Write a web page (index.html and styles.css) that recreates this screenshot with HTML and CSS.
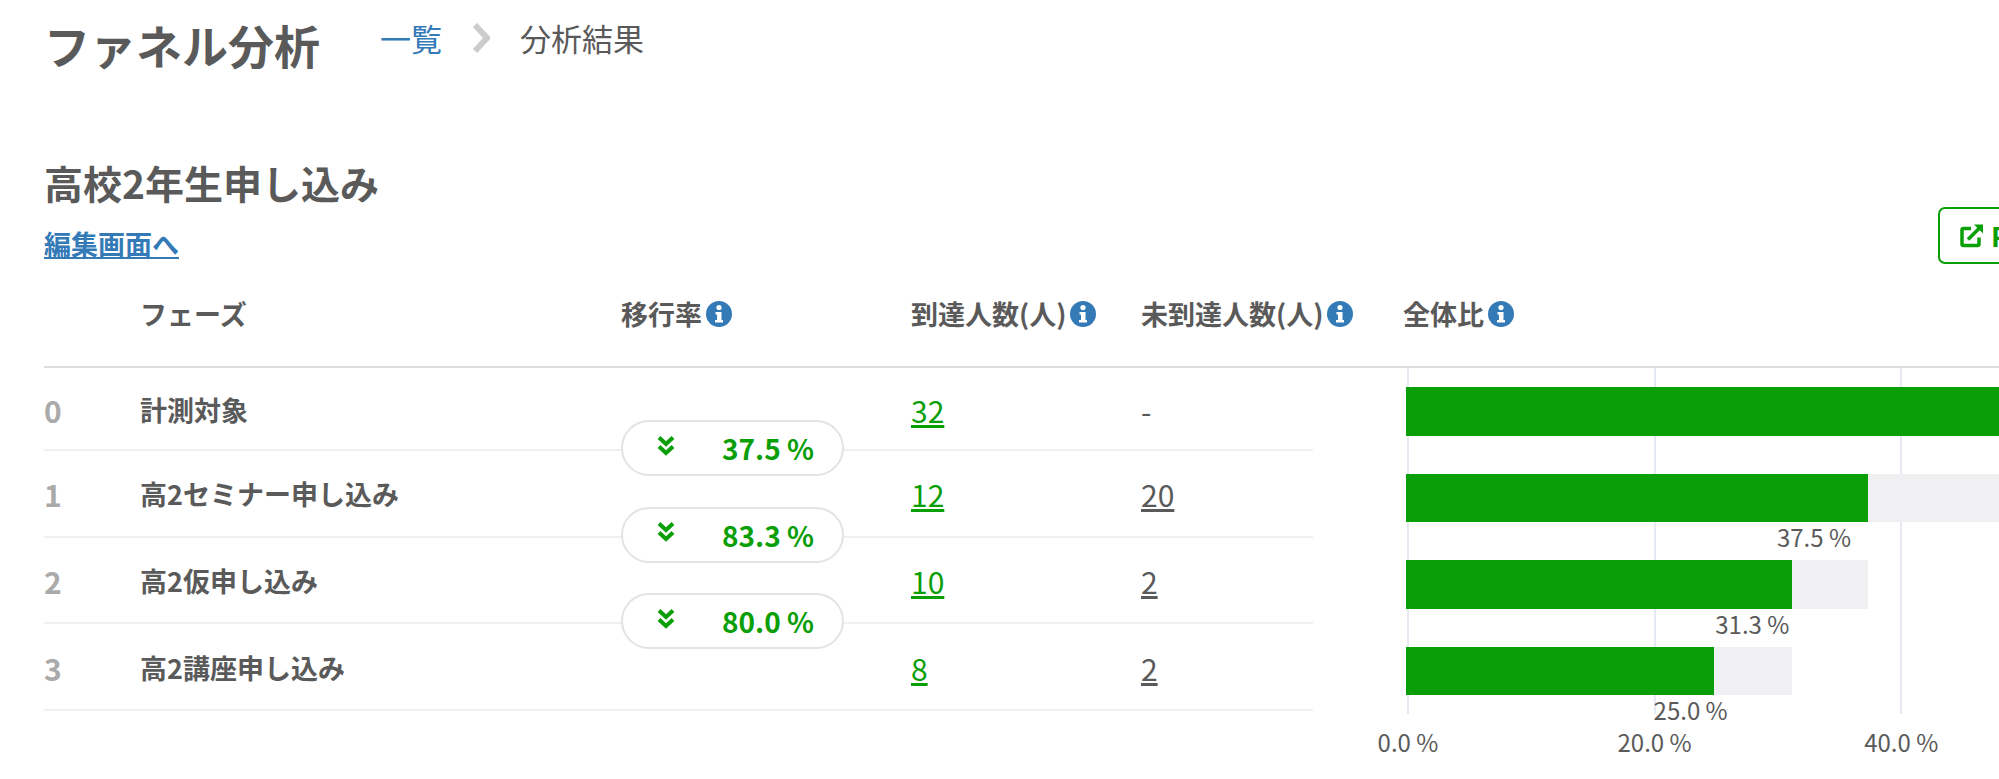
FILE: index.html

```html
<!DOCTYPE html>
<html lang="ja">
<head>
  <meta charset="UTF-8" />
  <meta name="viewport" content="width=device-width, initial-scale=1.0" />
  <title>ファネル分析</title>
  <link rel="stylesheet" href="styles.css">
</head>
<body>
<div class="container">
  <!-- Page title -->
  <div class="page-head">
    <h1>ファネル分析</h1>
    <nav class="breadcrumb">
      <a href="#">一覧</a>
      <svg class="crumb-sep" viewBox="0 0 18 30"><polyline points="3,2 15,15 3,28" /></svg>
      <span>分析結果</span>
    </nav>
  </div>

  <!-- Funnel title -->
  <div class="section-head">
    <div>
      <h2>高校2年生申し込み</h2>
      <a class="edit-link" href="#">編集画面へ</a>
    </div>
    <a class="btn-export" href="#">
      <svg class="icon-export" viewBox="0 0 24 24"><path d="M11 5H3.5A1.5 1.5 0 0 0 2 6.5v14A1.5 1.5 0 0 0 3.5 22h14a1.5 1.5 0 0 0 1.500-1.500V14" /><path d="M8 16L20 4" /><path class="arrow" d="M14 1h9v9z" /></svg>
      PDF出力
    </a>
  </div>

  <!-- Table header -->
  <div class="table-head">
    <span></span>
    <span>フェーズ</span>
    <span>移行率<svg class="icon-info" viewBox="0 0 26 26"><use href="#info" /></svg></span>
    <span>到達人数(人)<svg class="icon-info" viewBox="0 0 26 26"><use href="#info" /></svg></span>
    <span>未到達人数(人)<svg class="icon-info" viewBox="0 0 26 26"><use href="#info" /></svg></span>
    <span>全体比<svg class="icon-info" viewBox="0 0 26 26"><use href="#info" /></svg></span>
  </div>

  <div class="funnel">
    <div class="rows">
      <div class="row row-first">
        <span class="num">0</span>
        <span class="name">計測対象</span>
        <span></span>
        <a class="reach" href="#">32</a>
        <span class="miss">-</span>
        <div class="rate"><svg class="icon-down" viewBox="0 0 18 21"><use href="#down" /></svg><b>37.5 %</b></div>
      </div>
      <div class="row">
        <span class="num">1</span>
        <span class="name">高2セミナー申し込み</span>
        <span></span>
        <a class="reach" href="#">12</a>
        <a class="miss" href="#">20</a>
        <div class="rate"><svg class="icon-down" viewBox="0 0 18 21"><use href="#down" /></svg><b>83.3 %</b></div>
      </div>
      <div class="row">
        <span class="num">2</span>
        <span class="name">高2仮申し込み</span>
        <span></span>
        <a class="reach" href="#">10</a>
        <a class="miss" href="#">2</a>
        <div class="rate"><svg class="icon-down" viewBox="0 0 18 21"><use href="#down" /></svg><b>80.0 %</b></div>
      </div>
      <div class="row">
        <span class="num">3</span>
        <span class="name">高2講座申し込み</span>
        <span></span>
        <a class="reach" href="#">8</a>
        <a class="miss" href="#">2</a>
      </div>
    </div>

    <!-- Chart: 20% = 246.6px -->
    <div class="chart">
      <div class="grid" style="left:0%"><span>0.0 %</span></div>
      <div class="grid" style="left:20%"><span>20.0 %</span></div>
      <div class="grid" style="left:40%"><span>40.0 %</span></div>
      <div class="bars">
        <div class="track" style="width:100%"><div class="fill" style="width:100%"></div></div>
        <div class="track" style="width:100%"><div class="fill" style="width:37.5%"></div><span class="bar-label" style="left:30%">37.5 %</span></div>
        <div class="track-wrap">
          <div class="track" style="width:37.5%"><div class="fill" style="width:83.47%"></div></div>
          <span class="bar-label" style="left:25%">31.3 %</span>
        </div>
        <div class="track-wrap">
          <div class="track" style="width:31.3%"><div class="fill" style="width:79.87%"></div></div>
          <span class="bar-label" style="left:20%">25.0 %</span>
        </div>
      </div>
    </div>
  </div>
</div>

<svg class="defs" width="0" height="0">
  <symbol id="info" viewBox="0 0 26 26">
    <circle cx="13" cy="13" r="13" fill="#337ab7" />
    <circle cx="13" cy="6.500" r="2.600" fill="#fff" />
    <path d="M9.500 11h6v8h1.500v2.500H9v-2.500h2v-5.500H9.500z" fill="#fff" />
  </symbol>
  <symbol id="down" viewBox="0 0 18 21">
    <path d="M2 2.500l7 6.500 7-6.500M2 11.500l7 6.500 7-6.500" fill="none" stroke="#0a9e07" stroke-width="4" />
  </symbol>
</svg>
</body>
</html>
```

FILE: styles.css

```css
html, body { margin: 0; height: 100%; overflow: hidden; background: #fff; }
body { font-family: "Noto Sans CJK JP", "Noto Sans", sans-serif; color: #5a5a5a; }
a { color: inherit; }
.container { padding: 0 44px; width: 2100px; }
.defs { position: absolute; }

.page-head { display: flex; height: 92px; }
h1 { margin: 0; font-size: 46px; line-height: 88px; font-weight: 700; }
.breadcrumb { display: flex; align-items: center; height: 75px; margin-left: 60px; font-size: 31px; }
.breadcrumb a { color: #337ab7; text-decoration: none; }
.crumb-sep { width: 18px; height: 30px; margin: 0 30px; }
.crumb-sep polyline { fill: none; stroke: #ccc; stroke-width: 6; }

.section-head { display: flex; justify-content: space-between; margin-top: 65px; }
h2 { margin: 0; font-size: 39px; line-height: 50px; font-weight: 700; }
.edit-link { display: block; margin-top: 17px; font-size: 27px; line-height: 40px; color: #337ab7; font-weight: 700; }
.btn-export { display: flex; align-items: center; gap: 7px; box-sizing: border-box; width: 206px; height: 57px; margin-top: 50px; padding-left: 20px; border: 2px solid #0a9e07; border-radius: 7px; color: #0a9e07; font-size: 27px; font-weight: 700; text-decoration: none; }
.icon-export { width: 24px; height: 25px; flex: none; }
.icon-export path { fill: none; stroke: #0a9e07; stroke-width: 3.5; }
.icon-export .arrow { fill: #0a9e07; stroke: none; }

.table-head { display: grid; grid-template-columns: 96px 481px 290px 230px 262px 1fr; align-items: center; height: 99px; padding-bottom: 3px; border-bottom: 2px solid #ddd; font-size: 27px; font-weight: 700; }
.table-head span { display: flex; align-items: center; }
.icon-info { width: 26px; height: 26px; margin-left: 4px; flex: none; }

.funnel { display: flex; }
.rows { width: 1269px; flex: none; }
.row { position: relative; display: grid; grid-template-columns: 96px 481px 290px 230px 172px; align-items: center; box-sizing: border-box; height: 86.7px; padding-top: 2px; border-bottom: 2px solid #f0f0f0; font-size: 27px; line-height: 40px; }
.row-first { height: 83px; }
.num { color: #aaa; font-size: 30px; font-weight: 700; }
.name { font-weight: 700; }
.reach { color: #0a9e07; font-size: 30px; justify-self: start; }
.miss { font-size: 30px; justify-self: start; }
.rate { position: absolute; left: 577px; bottom: -27px; display: flex; align-items: center; box-sizing: border-box; width: 223px; height: 56px; padding-left: 34px; border: 2px solid #e3e3e3; border-radius: 28px; background: #fff; color: #0a9e07; font-size: 28px; z-index: 1; }
.rate b { margin-left: 47px; font-weight: 700; }
.icon-down { width: 18px; height: 21px; margin-top: -6px; flex: none; }

.chart { position: relative; width: 1233px; height: 346px; margin-left: 93px; flex: none; }
.grid { position: absolute; top: 0; bottom: 0; width: 2px; margin-left: 1px; background: #e4e9f4; }
.grid span { position: absolute; top: 100%; left: 1px; transform: translateX(-50%); font-size: 24px; line-height: 56px; white-space: nowrap; }
.bars { position: relative; display: flex; flex-direction: column; gap: 38.17px; padding-top: 19px; }
.track, .track-wrap { position: relative; height: 48.5px; }
.track { background: #f0f0f2; }
.fill { height: 100%; background: #0a9e07; }
.bar-label { position: absolute; top: 100%; margin-left: 1px; font-size: 24px; line-height: 30px; white-space: nowrap; }
```
